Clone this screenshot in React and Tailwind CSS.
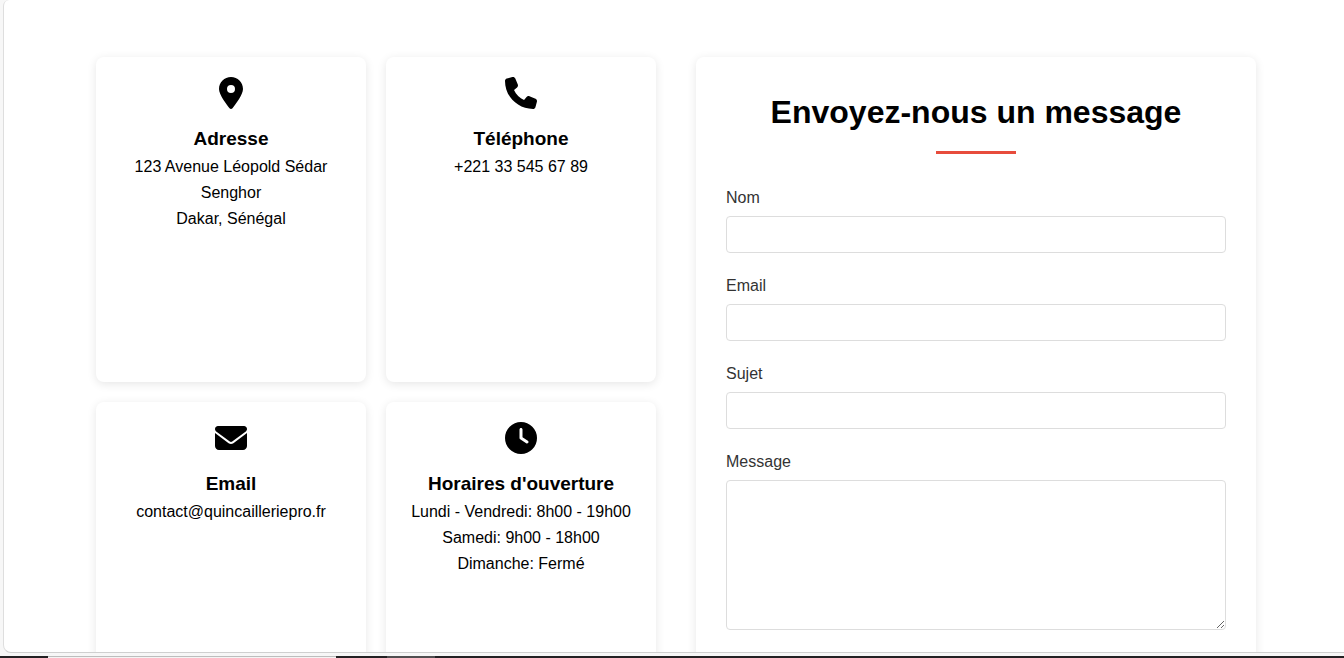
import { FaLocationDot, FaPhone, FaEnvelope, FaClock } from "react-icons/fa6";

const cards = [
  {
    title: "Adresse",
    Icon: FaLocationDot,
    lines: ["123 Avenue Léopold Sédar Senghor", "Dakar, Sénégal"],
  },
  { title: "Téléphone", Icon: FaPhone, lines: ["+221 33 545 67 89"] },
  { title: "Email", Icon: FaEnvelope, lines: ["contact@quincailleriepro.fr"] },
  {
    title: "Horaires d'ouverture",
    Icon: FaClock,
    lines: ["Lundi - Vendredi: 8h00 - 19h00", "Samedi: 9h00 - 18h00", "Dimanche: Fermé"],
  },
];

const fields = [
  { id: "nom", label: "Nom", type: "text" },
  { id: "email", label: "Email", type: "email" },
  { id: "sujet", label: "Sujet", type: "text" },
];

function InfoCard({ title, Icon, lines }) {
  return (
    <article className="rounded-lg bg-white p-5 text-center shadow-[0_2px_10px_rgba(0,0,0,0.1)]">
      <Icon className="mx-auto mb-[17px] size-8" aria-hidden="true" />
      <h3 className="text-[19px] leading-[26px] font-bold">{title}</h3>
      <div className="mt-0.5">
        {lines.map((line) => (
          <p key={line}>{line}</p>
        ))}
      </div>
    </article>
  );
}

function ContactForm() {
  return (
    <form className="rounded-lg bg-white p-[30px] shadow-[0_2px_10px_rgba(0,0,0,0.1)]">
      <h2 className="text-center text-[32px] leading-[51px] font-bold">Envoyez-nous un message</h2>
      <div className="mx-auto mt-[13px] mb-[31px] h-[3px] w-20 bg-[#e74c3c]" />
      <div className="flex flex-col gap-5 text-[#333]">
        {fields.map(({ id, label, type }) => (
          <div key={id} className="flex flex-col gap-[6px]">
            <label htmlFor={id} className="leading-[25px]">{label}</label>
            <input
              id={id}
              name={id}
              type={type}
              className="h-[37px] w-full rounded-sm border border-[#ddd] bg-white px-2"
            />
          </div>
        ))}
        <div className="flex flex-col gap-[6px]">
          <label htmlFor="message" className="leading-[25px]">Message</label>
          <textarea
            id="message"
            name="message"
            className="h-[150px] w-full resize-y rounded-sm border border-[#ddd] bg-white p-2"
          />
        </div>
      </div>
    </form>
  );
}

export default function App() {
  return (
    <div className="flex h-screen flex-col overflow-hidden bg-[#f7f7f7] font-['Liberation_Sans',Arial,sans-serif] text-base leading-[26px] text-black">
      <main className="ml-[3px] min-h-0 flex-1 overflow-hidden rounded-tl-md rounded-bl-lg border-b border-l border-b-[#cfcfcf] border-l-[#dedede] bg-white pl-1">
        <section className="mx-auto grid max-w-[1160px] grid-cols-2 gap-10 pt-[57px]">
          <div className="grid auto-rows-[325px] grid-cols-2 gap-5">
            {cards.map((card) => (
              <InfoCard key={card.title} {...card} />
            ))}
          </div>
          <ContactForm />
        </section>
      </main>
      <div className="mt-[3px] flex h-0.5 bg-[#232123]">
        <div className="ml-12 w-72 border-t border-[#bdbdbd] bg-[#f4f4f4]" />
        <div className="ml-[51px] w-12 bg-[#504e50]" />
      </div>
    </div>
  );
}
